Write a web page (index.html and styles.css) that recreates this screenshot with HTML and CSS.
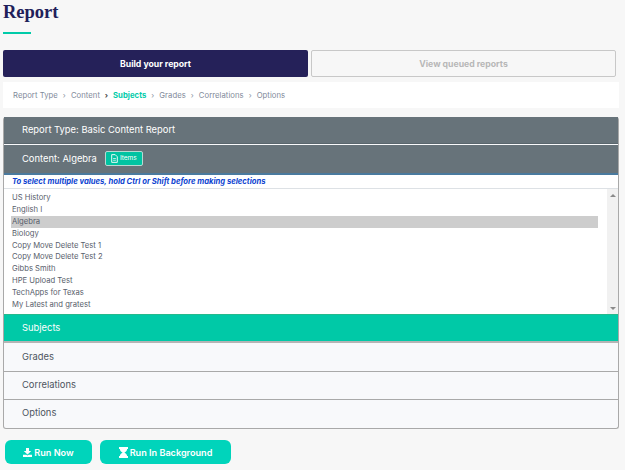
FILE: index.html
```html
<!DOCTYPE html>
<html lang="en">
<head>
<meta charset="utf-8">
<title>Report</title>
<link rel="stylesheet" href="styles.css">
</head>
<body>
<header class="head">
  <h1 class="title">Report</h1>
  <div class="rule"></div>
</header>
<nav class="tabs">
  <div class="tab tab-on">Build your report</div>
  <div class="tab tab-off">View queued reports</div>
</nav>
<ol class="crumbs">
  <li>Report Type</li><li class="sep">›</li>
  <li>Content</li><li class="sep sep-dark">›</li>
  <li class="crumb-on">Subjects</li><li class="sep">›</li>
  <li>Grades</li><li class="sep">›</li>
  <li>Correlations</li><li class="sep">›</li>
  <li>Options</li>
</ol>
<section class="panel">
  <div class="row row-grey">Report Type: Basic Content Report</div>
  <div class="row row-grey row-content">Content: Algebra
    <span class="items">
      <svg class="items-icon" viewBox="0 0 10 12" width="7" height="9"><path d="M1 .5h5l3 3v8H1z" fill="none" stroke="#fff" stroke-width="1.3"/><path d="M3 6h4M3 8.500h4" stroke="#fff"/></svg>Items
    </span>
  </div>
  <p class="note">To select multiple values, hold Ctrl or Shift before making selections</p>
  <div class="list">
    <ul class="options">
      <li>US History</li>
      <li>English I</li>
      <li class="picked">Algebra</li>
      <li>Biology</li>
      <li>Copy Move Delete Test 1</li>
      <li>Copy Move Delete Test 2</li>
      <li>Gibbs Smith</li>
      <li>HPE Upload Test</li>
      <li>TechApps for Texas</li>
      <li>My Latest and gratest</li>
    </ul>
    <div class="scroll">
      <span class="arrow-up"></span>
      <span class="arrow-down"></span>
    </div>
  </div>
  <div class="row row-green">Subjects</div>
  <div class="row row-light row-grades">Grades</div>
  <div class="row row-light">Correlations</div>
  <div class="row row-light row-last">Options</div>
</section>
<div class="actions">
  <button class="run run-now">
    <svg viewBox="0 0 12 12" width="9" height="9"><path d="M4 0h4v4h3L6 8.500 1 4h3z M0 9h4.500l1.500 1 1.500-1H12v3H0z" fill="#fff"/></svg>Run Now
  </button>
  <button class="run run-bg">
    <svg viewBox="0 0 10 12" width="9" height="11"><path d="M0 0h10v2H9c0 2-1.500 3-3 4 1.500 1 3 2 3 4h1v2H0v-2h1c0-2 1.500-3 3-4C2.500 5 1 4 1 2H0z" fill="#fff"/></svg>Run In Background
  </button>
</div>
</body>
</html>
```
FILE: styles.css
```css
* { box-sizing: border-box; }
html, body { margin: 0; padding: 0; }
body {
  width: 625px;
  height: 470px;
  overflow: hidden;
  background: #f7f7f7;
  font-family: "Inter", "Open Sans", sans-serif;
  color: #4d5560;
}
.head { height: 50px; padding-left: 3px; }
.title {
  margin: 0;
  height: 32px;
  font: 700 18.500px/24px "Liberation Serif", serif;
  color: #21205a;
}
.rule { width: 28px; height: 2px; background: #00cba9; }
.tabs { display: flex; gap: 3px; padding-left: 3px; }
.tab {
  width: 305px;
  height: 27px;
  border-radius: 2px;
  display: flex;
  align-items: center;
  justify-content: center;
  font-size: 8.700px;
  font-weight: 700;
}
.tab-on { background: #252159; color: #fff; }
.tab-off { background: #f7f7f7; color: #b7b7b7; border: 1px solid #c8c8c8; }
.crumbs {
  list-style: none;
  margin: 5px 6px 0 3px;
  padding: 0 0 0 10px;
  height: 26px;
  background: #fff;
  display: flex;
  align-items: center;
  gap: 4px;
  font-size: 7.700px;
  letter-spacing: .05px;
  color: #7f8a9a;
}
.sep { width: 5px; text-align: center; color: #8a93a0; }
.sep-dark { color: #444; font-weight: 700; }
.crumb-on { color: #00cba9; font-weight: 700; }
.panel {
  margin: 9px 6px 0 3px;
  height: 312px;
  border: 1px solid #a9a9a9;
  border-top: 0;
  border-radius: 3px;
  background: #f8f9fb;
  display: flex;
  flex-direction: column;
}
.row {
  display: flex;
  align-items: center;
  padding-left: 18px;
  padding-bottom: 2px;
  font-size: 9.400px;
  flex: none;
}
.row-grey { background: #67737a; color: #fff; height: 27px; border-bottom: 1px solid #5a666d; margin-bottom: 1px; }
.row-content { height: 30px; margin-bottom: 0; gap: 8px; border-bottom: 2px solid #4a7a9e; }
.items {
  display: inline-flex;
  align-items: center;
  gap: 2px;
  height: 15px;
  padding: 0 5px;
  background: #00c3a2;
  border: 1px solid #b8d8d2;
  border-radius: 2px;
  font-size: 6.500px;
  color: #fff;
}
.note {
  margin: 0;
  height: 14px;
  padding-left: 8px;
  background: #fff;
  border-bottom: 1px solid #dde1e5;
  font-size: 7.650px;
  line-height: 13px;
  font-weight: 700;
  font-style: italic;
  color: #0b3fd0;
}
.list { display: flex; height: 125px; background: #fff; }
.options { list-style: none; margin: 0; padding: 2px 0 0 7px; flex: 1; font-size: 7.650px; color: #59606c; }
.options li { height: 11.900px; line-height: 11.900px; padding-left: 1px; margin-right: 9px; }
.options li:first-child { margin-top: 1px; }
.options .picked { background: #cdcdcd; }
.scroll {
  width: 11px;
  background: #f1f1f1;
  display: flex;
  flex-direction: column;
  justify-content: space-between;
  align-items: center;
  padding: 5px 0 4px;
}
.arrow-up { border: 3px solid transparent; border-top: 0; border-bottom: 3px solid #8a8a8a; }
.arrow-down { border: 3px solid transparent; border-bottom: 0; border-top: 3px solid #8a8a8a; }
.row-green {
  background: #00c9a7;
  color: #fff;
  height: 29px;
  border-top: 1px solid #25b98c;
  border-bottom: 2px solid #b5b5b5;
}
.row-light { height: 28px; color: #4d5560; border-bottom: 1px solid #a9a9a9; }
.row-grades { height: 29px; }
.row-last { border-bottom: 0; flex: 1; padding-bottom: 3px; }
.actions { display: flex; gap: 8px; margin: 11px 0 0 5px; }
.run {
  height: 24px;
  border: 0;
  border-radius: 6px;
  background: #00d4bb;
  color: #fff;
  font: 600 9.100px "Inter", sans-serif;
  display: flex;
  align-items: center;
  justify-content: center;
  gap: 2px;
  padding: 0;
}
.run-now { width: 87px; }
.run-bg { width: 131px; }
```
